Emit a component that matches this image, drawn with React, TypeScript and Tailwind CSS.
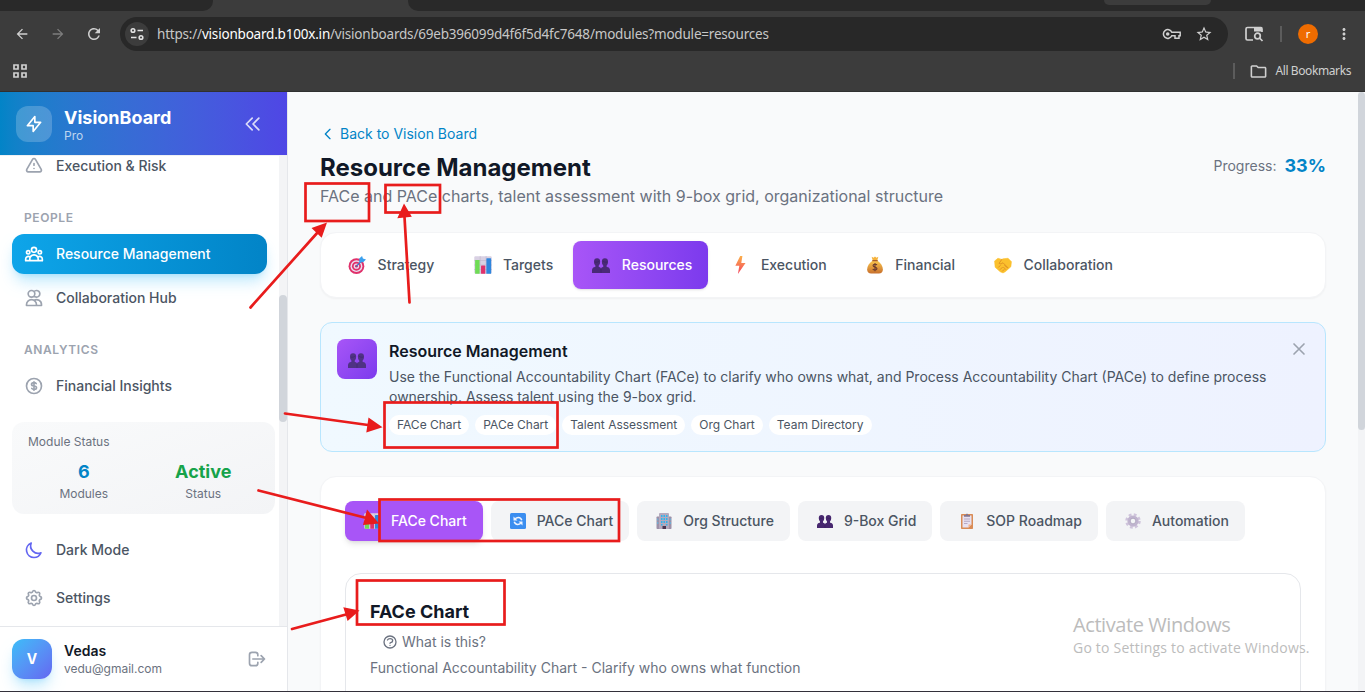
import { useState } from 'react';
import type { ComponentType, ReactNode } from 'react';
import {
  HiOutlineChevronDoubleLeft,
  HiOutlineChevronLeft,
  HiOutlineCog,
  HiOutlineCurrencyDollar,
  HiOutlineExclamation,
  HiOutlineLightningBolt,
  HiOutlineLogout,
  HiOutlineMoon,
  HiOutlineQuestionMarkCircle,
  HiOutlineUserGroup,
  HiOutlineUsers,
  HiOutlineX,
} from 'react-icons/hi';
import {
  MdArrowBack,
  MdArrowForward,
  MdMoreVert,
  MdOutlineFolder,
  MdRefresh,
  MdStarBorder,
} from 'react-icons/md';

type IconProps = { className?: string };

const TargetEmoji = ({ className }: IconProps) => (
  <svg viewBox="0 0 32 32" className={className}>
    <circle cx="15" cy="18" r="14" fill="#e0316b" />
    <circle cx="15" cy="18" r="10.6" fill="#e9dff0" />
    <circle cx="15" cy="18" r="8" fill="#e0316b" />
    <circle cx="15" cy="18" r="4.8" fill="#e9dff0" />
    <circle cx="15" cy="18" r="2.4" fill="#d82a62" />
    <path d="M15 18 25 8" stroke="#3c78c8" strokeWidth="2.2" strokeLinecap="round" />
    <path d="M20 11V4.500l5-4.500 1.500 4.500 5.500 1.500-5 5z" fill="#3aa0ee" />
  </svg>
);

const ChartEmoji = ({ className }: IconProps) => (
  <svg viewBox="0 0 32 32" className={className}>
    <rect x="0.500" y="0.500" width="31" height="31" rx="2" fill="#d9d1e3" />
    <path d="M0 8h32M0 16h32M0 24h32M11 0v32M21.500 0v32" stroke="#b9afc6" strokeWidth="0.800" />
    <rect x="2" y="7" width="8" height="24.500" rx="1" fill="#6fdc55" />
    <rect x="12.500" y="17" width="7.500" height="14.500" rx="1" fill="#e0316b" />
    <rect x="22" y="4" width="8.500" height="27.500" rx="1" fill="#2f86dd" />
  </svg>
);

const PeopleEmoji = ({ className }: IconProps) => (
  <svg viewBox="0 0 32 32" className={className} fill="currentColor">
    <path d="M3.500 10q0-6 5.500-6t5.500 6q0 5-2.500 7v3H6v-3q-2.500-2-2.500-7zM17.500 10q0-6 5.500-6t5.500 6q0 5-2.500 7v3h-6v-3q-2.500-2-2.500-7z" />
    <path d="M0 30v-5q0-6 9-6 7 0 7 4 0-4 7-4 9 0 9 6v5z" />
    <path d="M16 22v8M5 11q4 1 8-2M19 9q4 3 8 2" stroke="#1c0d33" strokeOpacity="0.350" fill="none" />
  </svg>
);

const BoltEmoji = ({ className }: IconProps) => (
  <svg viewBox="0 0 32 32" className={className}>
    <defs>
      <linearGradient id="bolt" x1="0" y1="0" x2="0" y2="1">
        <stop offset="0" stopColor="#fbb04a" />
        <stop offset="1" stopColor="#f3425f" />
      </linearGradient>
    </defs>
    <path d="M14.500 0 6 17.500h7L10.500 32 24 12.500h-7.500L18.500 0z" fill="url(#bolt)" />
  </svg>
);

const MoneyEmoji = ({ className }: IconProps) => (
  <svg viewBox="0 0 32 32" className={className}>
    <defs>
      <linearGradient id="bag" x1="0" y1="0" x2="0" y2="1">
        <stop offset="0" stopColor="#fcc84e" />
        <stop offset="1" stopColor="#c8702c" />
      </linearGradient>
    </defs>
    <path d="M10 1.500 13.500 3 16 1l2.500 2L22 1.500 20 8h-8z" fill="#f5b23c" />
    <path d="M12 8h8c6 4 10 10 10 16 0 5-3 7-7 7H9c-4 0-7-2-7-7 0-6 4-12 10-16z" fill="url(#bag)" />
    <rect x="11" y="7" width="10" height="2.500" rx="1.200" fill="#a85d2d" />
    <path d="M19.500 16c-1-2-7-2-7 1s7 2.500 7 5.500-6 3-7.500.500M16 12.500v14.500" stroke="#6b3a2e" strokeWidth="2" fill="none" />
  </svg>
);

const HandshakeEmoji = ({ className }: IconProps) => (
  <svg viewBox="0 0 32 32" className={className}>
    <path d="M1 9 7 4l7 2 2-1 9-1 6 6-1 9-10 9-4 2-5-2-9-8z" fill="#fbc02d" stroke="#fbc02d" strokeLinejoin="round" />
    <path d="m14 6-5 7q3 3 7-1l9 9M8 20l3-3M11 24l4-4M15 27l3-3M21 24l-4-4M24 21l-5-4" stroke="#df8f22" strokeWidth="1.600" fill="none" strokeLinecap="round" />
  </svg>
);

const CycleEmoji = ({ className }: IconProps) => (
  <svg viewBox="0 0 32 32" className={className}>
    <rect width="32" height="32" rx="3" fill="#3b8ef0" />
    <path d="M9.500 13.500a7.500 7.500 0 0 1 14 1M22.500 18.500a7.500 7.500 0 0 1-14-1" stroke="#eef4ff" strokeWidth="3" fill="none" />
    <path d="M7 7v8h8zM25 25v-8h-8z" fill="#eef4ff" />
  </svg>
);

const BuildingEmoji = ({ className }: IconProps) => (
  <svg viewBox="0 0 32 32" className={className}>
    <rect x="1" y="7" width="30" height="25" rx="1.500" fill="#9c90a8" />
    <rect x="6" y="0" width="20" height="32" rx="2" fill="#b5a9bd" />
    <path d="M10 4h3v4h-3zM15 4h3v4h-3zM20 4h3v4h-3zM10 10h3v4h-3zM15 10h3v4h-3zM20 10h3v4h-3zM10 16h3v4h-3zM15 16h3v4h-3zM20 16h3v4h-3zM10 22h3v3h-3zM20 22h3v3h-3z" fill="#2fb4ee" />
    <path d="M2.500 11h2v4h-2zM2.500 18h2v4h-2zM27.500 11h2v4h-2zM27.500 18h2v4h-2z" fill="#5fb6df" />
    <path d="M13 26h7v6h-7z" fill="#4a3550" />
  </svg>
);

const ClipboardEmoji = ({ className }: IconProps) => (
  <svg viewBox="0 0 32 32" className={className}>
    <rect x="4" y="2" width="24" height="30" rx="1.500" fill="#d98b55" />
    <path d="M7 5h18v18l-6 6H7z" fill="#e8e1f0" />
    <path d="M25 23h-6v6z" fill="#f5b183" />
    <path d="M10 12h12M10 16.500h12M10 21h7" stroke="#a99bb8" strokeWidth="1.600" />
    <path d="M10 7.500V4h3.500q2.500-6 5 0H22v3.500z" fill="#837690" />
  </svg>
);

const GearEmoji = ({ className }: IconProps) => (
  <svg viewBox="0 0 32 32" className={className}>
    <circle cx="16" cy="16" r="13" fill="none" stroke="#cfc4dc" strokeWidth="5" strokeDasharray="5.600 4.610" />
    <circle cx="16" cy="16" r="8.500" fill="none" stroke="#c0b4cf" strokeWidth="5.500" />
    <circle cx="16" cy="16" r="5.600" fill="none" stroke="#9487a8" strokeWidth="1.200" />
  </svg>
);

const TuneIcon = () => (
  <svg viewBox="0 0 16 16" className="size-4" fill="none" stroke="#e3e3e3" strokeWidth="1.600">
    <circle cx="4" cy="4.500" r="1.800" />
    <path d="M8.500 4.500H14M2 11.500h5.500" />
    <circle cx="12" cy="11.500" r="1.800" />
  </svg>
);

const KeyIcon = () => (
  <svg viewBox="0 0 20 12" className="h-3 w-5" fill="none" stroke="#d0d0d0" strokeWidth="1.500">
    <path d="M9.800 4.200A4.400 4.400 0 1 0 9.800 7.800H13v2.400h4V7.800h1.200V4.200z" />
    <circle cx="5.700" cy="6" r="1.800" fill="#d0d0d0" stroke="none" />
  </svg>
);

const PanelSearchIcon = () => (
  <svg viewBox="0 0 20 18" className="h-[18px] w-5" fill="none" stroke="#d0d0d0" strokeWidth="1.700">
    <path d="M9 15H3.500Q2 15 2 13.500V4Q2 2.500 3.500 2.500H17Q18 2.500 18 4V7" />
    <path d="M10 2.500h8v4h-8z" fill="#d0d0d0" stroke="none" />
    <circle cx="13.500" cy="11" r="2.800" />
    <path d="m15.500 13 3 3" />
  </svg>
);

const BrowserBar = () => (
  <div className="h-[92px] shrink-0 border-b border-[#303030] bg-[#3c3c3c] font-['Noto_Sans',sans-serif] text-[#d0d0d0]">
    <div className="flex h-[11px] justify-between bg-[#3c3c3c]">
      <div className="w-[213px] rounded-br-[10px] bg-[#292929]" />
      <div className="flex w-[957px] rounded-bl-[10px] bg-[#292929]">
        <div className="ml-[696px] h-[5px] w-[107px] rounded-b-[8px] bg-[#3c3c3c]" />
      </div>
    </div>
    <div className="flex h-[46px] items-center">
      <MdArrowBack className="ml-3.5 size-4 text-[#d0d0d0]" />
      <MdArrowForward className="ml-5 size-4 text-[#7d7d7d]" />
      <MdRefresh className="ml-[19px] size-[18px] text-[#d0d0d0]" />
      <div className="ml-[17px] flex h-[34px] w-[1108px] items-center rounded-full bg-[#282828] pl-[5px]">
        <div className="flex size-6 items-center justify-center rounded-full bg-[#3c3c3c]">
          <TuneIcon />
        </div>
        <p className="ml-2 text-[13.500px] tracking-[-0.200px] whitespace-nowrap text-[#c7c7c7]">
          https://<span className="text-white">visionboard.b100x.in</span>
          /visionboards/69eb396099d4f6f5d4fc7648/modules?module=resources
        </p>
        <div className="ml-auto flex items-center gap-[13px] pr-[15px]">
          <KeyIcon />
          <MdStarBorder className="size-[18px]" />
        </div>
      </div>
      <div className="ml-4"><PanelSearchIcon /></div>
      <div className="ml-4 h-4 w-[2px] bg-[#5c5c5c]" />
      <div className="ml-4 flex size-5 items-center justify-center rounded-full bg-[#ef6c00] text-[11px] text-white">r</div>
      <MdMoreVert className="ml-[17px] size-[18px]" />
    </div>
    <div className="flex h-7 items-center">
      <svg viewBox="0 0 14 14" className="ml-[13px] size-3.5" fill="none" stroke="#d0d0d0" strokeWidth="1.700">
        <path d="M1 1h4v4H1zM9 1h4v4H9zM1 9h4v4H1zM9 9h4v4H9z" />
      </svg>
      <div className="ml-auto h-4 w-[2px] bg-[#5c5c5c]" />
      <MdOutlineFolder className="ml-3.5 size-[19px]" />
      <span className="mr-3.5 ml-[7px] text-[12px] tracking-[-0.400px] whitespace-nowrap">All Bookmarks</span>
    </div>
  </div>
);

const NavItem = ({ icon: Icon, label, active }: { icon: ComponentType<IconProps>; label: string; active?: boolean }) => (
  <button
    className={`flex h-10 w-[255px] shrink-0 items-center gap-3 rounded-xl px-3 text-sm font-medium ${
      active
        ? 'bg-gradient-to-r from-[#0ea5e9] to-[#0284c7] text-white shadow-lg shadow-sky-500/25'
        : 'text-[#4b5563]'
    }`}
  >
    <Icon className={`size-5 ${active ? 'text-white' : label === 'Dark Mode' ? 'text-[#6366f1]' : 'text-[#9ca3af]'}`} />
    {label}
  </button>
);

const NavHeading = ({ children }: { children: ReactNode }) => (
  <h3 className="px-3 text-xs leading-4 font-semibold tracking-wider text-[#9ca3af] uppercase">{children}</h3>
);

const Sidebar = () => (
  <aside className="flex w-[288px] shrink-0 flex-col border-r border-[#e5e7eb] bg-white">
    <div className="flex h-[63px] shrink-0 items-center bg-gradient-to-r from-[#0284c7] to-[#4f46e5] px-4 text-white">
      <div className="flex size-9 items-center justify-center rounded-xl bg-white/20">
        <HiOutlineLightningBolt className="size-5" />
      </div>
      <div className="ml-3 pt-0.5">
        <h1 className="text-lg leading-[22px] font-bold">VisionBoard</h1>
        <p className="text-xs leading-[14px] text-white/70">Pro</p>
      </div>
      <HiOutlineChevronDoubleLeft className="mr-2 ml-auto size-5 text-white/80" />
    </div>
    <div className="flex min-h-0 flex-1 border-t border-[#eef0f3]">
      <nav className="flex w-[279px] flex-col overflow-hidden px-3">
        <div className="-mt-[10px]"><NavItem icon={HiOutlineExclamation} label="Execution & Risk" /></div>
        <div className="mt-6"><NavHeading>People</NavHeading></div>
        <div className="mt-2 flex flex-col gap-1">
          <NavItem icon={HiOutlineUserGroup} label="Resource Management" active />
          <NavItem icon={HiOutlineUsers} label="Collaboration Hub" />
        </div>
        <div className="mt-6"><NavHeading>Analytics</NavHeading></div>
        <div className="mt-2"><NavItem icon={HiOutlineCurrencyDollar} label="Financial Insights" /></div>
        <div className="mt-4 h-[92px] w-[263px] shrink-0 rounded-xl bg-gradient-to-br from-[#f9fafb] to-[#f3f4f6] px-4 pt-3 text-xs text-[#6b7280]">
          <p className="leading-4">Module Status</p>
          <div className="mt-2 grid grid-cols-2 gap-2 text-center">
            <div>
              <p className="text-lg leading-7 font-bold text-[#0284c7]">6</p>
              <p>Modules</p>
            </div>
            <div>
              <p className="text-lg leading-7 font-bold text-[#16a34a]">Active</p>
              <p>Status</p>
            </div>
          </div>
        </div>
        <div className="mt-4 flex flex-col gap-2">
          <NavItem icon={HiOutlineMoon} label="Dark Mode" />
          <NavItem icon={HiOutlineCog} label="Settings" />
        </div>
      </nav>
      <div className="w-2 bg-[#f3f4f6]">
        <div className="mt-[139px] h-[127px] rounded-full bg-[#d1d5db]" />
      </div>
    </div>
    <div className="flex h-[65px] shrink-0 items-center border-t border-[#e5e7eb] px-3">
      <div className="flex size-10 items-center justify-center rounded-xl bg-gradient-to-br from-[#38bdf8] to-[#6366f1] text-sm font-bold text-white shadow-lg shadow-sky-500/25">
        V
      </div>
      <div className="ml-3">
        <p className="text-sm leading-[18px] font-semibold text-[#111827]">Vedas</p>
        <p className="text-xs leading-[17px] text-[#6b7280]">vedu@gmail.com</p>
      </div>
      <HiOutlineLogout className="mr-2 ml-auto size-5 text-[#9ca3af]" />
    </div>
  </aside>
);

const modules = [
  { label: 'Strategy', icon: TargetEmoji },
  { label: 'Targets', icon: ChartEmoji },
  { label: 'Resources', icon: PeopleEmoji },
  { label: 'Execution', icon: BoltEmoji },
  { label: 'Financial', icon: MoneyEmoji },
  { label: 'Collaboration', icon: HandshakeEmoji },
];

const charts = [
  { label: 'FACe Chart', icon: ChartEmoji },
  { label: 'PACe Chart', icon: CycleEmoji },
  { label: 'Org Structure', icon: BuildingEmoji },
  { label: '9-Box Grid', icon: PeopleEmoji },
  { label: 'SOP Roadmap', icon: ClipboardEmoji },
  { label: 'Automation', icon: GearEmoji },
];

const tags = ['FACe Chart', 'PACe Chart', 'Talent Assessment', 'Org Chart', 'Team Directory'];

const Annotations = () => (
  <svg className="pointer-events-none absolute inset-0" width="1365" height="692" fill="none" stroke="#e81c1c" strokeWidth="2.700">
    <rect x="305.500" y="183.500" width="63.500" height="37.500" />
    <rect x="385.500" y="185" width="54.500" height="27.500" />
    <rect x="384.500" y="402.500" width="173" height="45" />
    <rect x="379.500" y="499.500" width="239.500" height="41.500" />
    <rect x="357" y="580.500" width="147.500" height="44" />
    <path strokeLinecap="round" d="M250.500 307.500 318 232M409.500 302.500 404.500 217M285 413.500l83 11.500M258.500 490.500l108 27.500M292 629l54-14.500" />
    <g fill="#e81c1c" stroke="none">
      <path d="m327 222.500-15.500 5.500 10.200 9.800zM404 203.500l-6.700 14.800 14.500-1.500zM382.500 427.300l-14-9.700-2.200 15zM379 523.500l-12-14-4 15.500zM359.500 610.500l-16.200-3.300 4.300 13.800z" />
    </g>
  </svg>
);

const App = () => {
  const [activeModule, setActiveModule] = useState('Resources');
  const [activeChart, setActiveChart] = useState('FACe Chart');

  return (
    <div className="relative flex h-[692px] w-[1365px] flex-col overflow-hidden border-b border-[#33303a] font-['Inter',sans-serif]">
      <BrowserBar />
      <div className="flex min-h-0 flex-1 bg-[#f9fafb]">
        <Sidebar />
        <main className="flex min-w-0 flex-1 flex-col overflow-hidden px-8 pt-8">
          <div className="flex shrink-0 items-center justify-between">
            <div>
              <a className="flex items-center gap-1 text-sm text-[#0284c7]">
                <HiOutlineChevronLeft className="size-4" />
                Back to Vision Board
              </a>
              <h2 className="mt-2 text-2xl leading-8 font-bold text-[#111827]">Resource Management</h2>
              <p className="text-base leading-6 text-[#6b7280]">
                FACe and PACe charts, talent assessment with 9-box grid, organizational structure
              </p>
            </div>
            <div className="flex items-center gap-2">
              <span className="text-sm text-[#6b7280]">Progress:</span>
              <span className="text-lg leading-7 font-bold text-[#0284c7]">33%</span>
            </div>
          </div>

          <div className="mt-6 flex shrink-0 gap-1 rounded-2xl border border-[#f3f4f6] bg-white p-2 shadow-[0_1px_2px_rgba(0,0,0,0.04)]">
            {modules.map(({ label, icon: Icon }) => (
              <button
                key={label}
                onClick={() => setActiveModule(label)}
                className={`flex h-12 items-center gap-2 rounded-lg px-4 text-sm font-medium ${
                  activeModule === label
                    ? 'bg-gradient-to-r from-[#a855f7] to-[#7c3aed] text-white shadow-sm'
                    : 'text-[#4b5563]'
                }`}
              >
                <span className="flex w-[24.600px] justify-center">
                  <Icon className="size-[18px] text-[#4a2a78]" />
                </span>
                {label}
              </button>
            ))}
          </div>

          <div className="mt-6 flex h-[130px] shrink-0 rounded-xl border border-[#b8e6fe] bg-gradient-to-r from-[#f0f9ff] to-[#eef2ff] p-4">
            <div className="flex size-10 shrink-0 items-center justify-center rounded-lg bg-gradient-to-br from-[#a855f7] to-[#7c3aed]">
              <PeopleEmoji className="mt-0.5 size-[18px] text-[#4f3285]" />
            </div>
            <div className="ml-3 flex-1">
              <h3 className="text-base leading-6 font-semibold text-[#111827]">Resource Management</h3>
              <p className="mt-1 w-[890px] text-sm leading-5 text-[#4b5563]">
                Use the Functional Accountability Chart (FACe) to clarify who owns what, and Process Accountability
                Chart (PACe) to define process ownership. Assess talent using the 9-box grid.
              </p>
              <div className="mt-2 flex gap-1.5">
                {tags.map((tag) => (
                  <span key={tag} className="rounded-full bg-white px-2 py-0.5 text-xs text-[#4b5563]">{tag}</span>
                ))}
              </div>
            </div>
            <HiOutlineX className="size-5 text-[#9ca3af]" />
          </div>

          <div className="mt-6 shrink-0 rounded-2xl border border-[#f3f4f6] bg-white p-6 pb-0 shadow-[0_1px_2px_rgba(0,0,0,0.04)]">
            <div className="flex gap-2">
              {charts.map(({ label, icon: Icon }) => (
                <button
                  key={label}
                  onClick={() => setActiveChart(label)}
                  className={`flex h-10 items-center gap-2 rounded-lg px-4 text-sm font-medium ${
                    activeChart === label ? 'bg-[#a855f7] text-white shadow-md' : 'bg-[#f3f4f6] text-[#4b5563]'
                  }`}
                >
                  <span className="flex w-[22px] justify-center">
                    <Icon className="size-4 text-[#47276f]" />
                  </span>
                  {label}
                </button>
              ))}
            </div>
            <div className="mt-8 h-[200px] rounded-2xl border border-[#e5e7eb] bg-white px-6 pt-6">
              <h3 className="text-lg leading-7 font-bold text-[#111827]">{activeChart}</h3>
              <button className="mt-1.5 ml-3 flex items-center gap-1 text-sm text-[#6b7280]">
                <HiOutlineQuestionMarkCircle className="size-4" />
                What is this?
              </button>
              <p className="mt-1.5 text-sm text-[#6b7280]">
                Functional Accountability Chart - Clarify who owns what function
              </p>
            </div>
          </div>
        </main>
        <div className="w-[7px] shrink-0 bg-[#f3f4f6]">
          <div className="h-[338px] rounded-full bg-[#d1d5db]" />
        </div>
      </div>

      <div className="pointer-events-none absolute top-[612px] left-[1073px] font-['Open_Sans',sans-serif] whitespace-nowrap text-[#bcbcbc]">
        <p className="text-[20px] leading-[26px] tracking-[-0.420px]">Activate Windows</p>
        <p className="text-[14px] leading-5 tracking-[0.210px]">Go to Settings to activate Windows.</p>
      </div>
      <Annotations />
    </div>
  );
};

export default App;
